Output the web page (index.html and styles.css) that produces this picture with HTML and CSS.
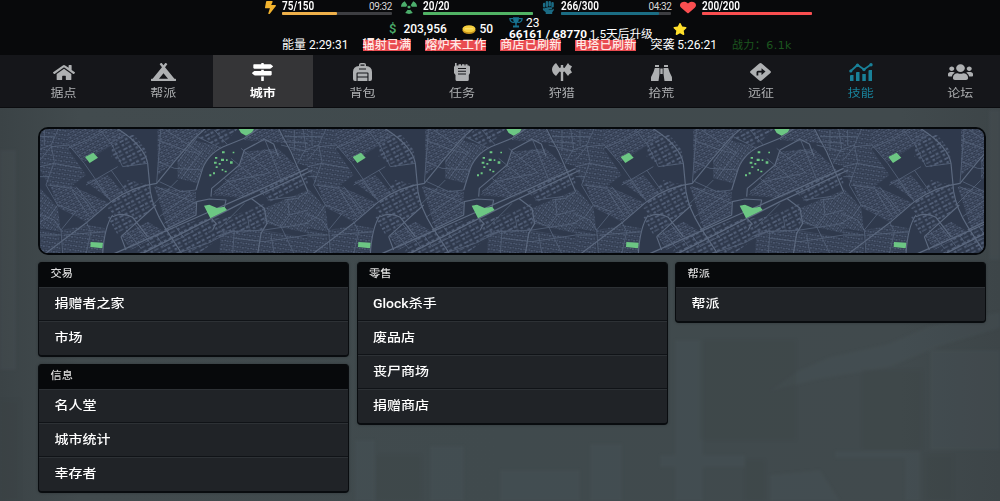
FILE: index.html
```html
<!DOCTYPE html>
<html lang="zh-CN">
<head>
<meta charset="utf-8">
<title>城市</title>
<link rel="stylesheet" href="styles.css">
</head>
<body>
<svg class="backdrop" viewBox="0 0 1000 501" aria-hidden="true">
  <g fill="#59666a" opacity=".13">
    <path d="M770 391L798 371 830 357 888 344 930 326 1000 312V328L940 346 890 367 820 379Z"/>
    <path d="M660 455h85v12h-85zM675 340h28v161h-28zM930 350h70v100h-70zM770 475l50-5 20 31h-70zM835 451h80v7h-80zM905 451h15v50h-15zM355 440h20v61h-20zM430 446h34v55h-34zM500 470h80v31h-80z"/>
    <path d="M0 150h16v220H0zM989 110h11v150h-11zM590 444h32v57h-32z"/>
  </g>
  <g fill="#343c3f" opacity=".15">
    <path d="M700 340h96v100h-96zM862 370h60v80h-60zM745 460h20v41h-20zM925 455h28v46h-28zM376 455h45v46h-45zM0 400h20v101H0z"/>
  </g>
</svg>

<header class="status">
  <div class="bars">
    <div class="stat">
      <svg class="stat-icon" viewBox="0 0 320 512" preserveAspectRatio="none" style="width:11px" fill="#f2b32e"><path d="M296 160H180.6l42.6-129.8C227.2 15 215.7 0 200 0H56C44 0 33.8 8.9 32.2 20.8l-32 240C-1.7 275.2 9.5 288 24 288h118.7L96.6 482.5c-3.6 15.2 8 29.5 23.3 29.5 8.4 0 16.4-4.4 20.8-12l176-304c9.3-15.9-2.2-36-20.7-36z"/></svg>
      <div class="meter"><div class="meter-text"><b>75/150</b><span>09:32</span></div><div class="track"><div class="fill gold" style="width:50%"></div></div></div>
    </div>
    <div class="stat">
      <svg class="stat-icon" viewBox="0 0 16 14" preserveAspectRatio="none" style="width:16px" fill="#4cae6c"><path d="M0 6.3A8 7 0 0 1 3.8.4L6.3 4.6A2.6 2.6 0 0 0 5.2 6.3ZM16 6.3A8 7 0 0 0 12.2.4L9.7 4.6A2.6 2.6 0 0 1 10.8 6.3ZM6.7 9.3L4.2 13A8 7 0 0 0 11.8 13L9.3 9.3A3 3 0 0 1 6.7 9.3Z"/><ellipse cx="8" cy="6.5" rx="1.6" ry="1.5"/></svg>
      <div class="meter"><div class="meter-text"><b>20/20</b></div><div class="track"><div class="fill green" style="width:100%"></div></div></div>
    </div>
    <div class="stat">
      <svg class="stat-icon" viewBox="0 0 14 14" preserveAspectRatio="none" style="width:13px" fill="#1b6b84"><rect x="1" y="2" width="2.6" height="5" rx="1.2"/><rect x="4" y="0" width="2.6" height="6.5" rx="1.2"/><rect x="7" y="0" width="2.6" height="6" rx="1.2"/><rect x="10" y="1" width="2.7" height="6" rx="1.2"/><path d="M1 7.500Q2.500 8.300 3.800 7.200 5 7.500 6 6.800H10.500A1 1 0 0 1 10.500 8.500H7.500L7 9.200H11.500L12.700 8V10L11 12V14H4V12L1 9.800Z"/></svg>
      <div class="meter"><div class="meter-text"><b>266/300</b><span>04:32</span></div><div class="track"><div class="fill teal" style="width:88.7%"></div></div></div>
    </div>
    <div class="stat">
      <svg class="stat-icon" viewBox="0 0 512 512" preserveAspectRatio="none" style="width:16px" fill="#fa4e50"><path d="M462.300 62.600C407.500 15.900 326 24.300 275.700 76.200L256 96.500l-19.700-20.300C186.100 24.300 104.500 15.900 49.700 62.600c-62.800 53.600-66.100 149.800-9.900 207.900l193.500 199.800c12.500 12.900 32.800 12.900 45.300 0l193.500-199.800c56.300-58.100 53-154.300-9.800-207.900z"/></svg>
      <div class="meter"><div class="meter-text"><b>200/200</b></div><div class="track"><div class="fill red" style="width:100%"></div></div></div>
    </div>
  </div>
  <div class="wallet">
    <span class="dollar">$</span><span class="cash">203,956</span>
    <svg class="coin" viewBox="0 0 14 9"><ellipse cx="7" cy="5.200" rx="6.500" ry="3.800" fill="#c8941c"/><ellipse cx="7" cy="3.800" rx="6.500" ry="3.500" fill="#f6cf3e"/><path d="M3 3.800H11" stroke="#ffe67a"/></svg>
    <span class="gold-count">50</span>
    <div class="level">
      <div class="rank">
        <svg width="14" height="11" viewBox="0 0 14 11"><path d="M4 .3H10C10 4 9.200 6 7.700 6.600V8.500H10V10.600H4V8.500H6.300V6.600C4.800 6 4 4 4 .3Z" fill="#177391"/><path d="M4 1.700H.9C1 4 2.800 5.300 5 5.500M10 1.700H13.100C13 4 11.200 5.300 9 5.500" fill="none" stroke="#177391" stroke-width="1.200"/></svg>
        <span>23</span>
      </div>
      <div class="xp"><b>66161 / 68770</b> <span>1.5天后升级</span></div>
    </div>
    <svg class="star" viewBox="0 0 576 512" preserveAspectRatio="none"><path fill="#ffdf2b" d="M259.300 17.800L194 150.200 47.900 171.500c-26.200 3.800-36.700 36.100-17.700 54.600l105.700 103-25 145.500c-4.500 26.300 23.200 46 46.400 33.700L288 439.600l130.700 68.700c23.200 12.200 50.900-7.400 46.400-33.700l-25-145.500 105.700-103c19-18.500 8.500-50.800-17.700-54.600L382 150.200 316.700 17.800c-11.700-23.600-45.600-23.900-57.400 0z"/></svg>
  </div>
  <div class="timers">
    <span>能量 2:29:31</span>
    <span class="tag">辐射已满</span>
    <span class="tag">熔炉未工作</span>
    <span class="tag">商店已刷新</span>
    <span class="tag">电塔已刷新</span>
    <span>突袭 5:26:21</span>
    <span class="power">战力：6.1k</span>
  </div>
</header>

<nav class="nav">
  <a class="tab"><svg style="width:22px;height:17px" viewBox="0 0 576 512" preserveAspectRatio="none"><path d="M280.370 148.260L96 300.110V464a16 16 0 0 0 16 16l112.060-.29a16 16 0 0 0 15.920-16V368a16 16 0 0 1 16-16h64a16 16 0 0 1 16 16v95.640a16 16 0 0 0 16 16.050L464 480a16 16 0 0 0 16-16V300L295.670 148.260a12.190 12.190 0 0 0-15.300 0zM571.600 251.470L488 182.560V44.050a12 12 0 0 0-12-12h-56a12 12 0 0 0-12 12v72.610L318.470 43a48 48 0 0 0-61 0L4.340 251.470a12 12 0 0 0-1.600 16.900l25.500 31A12 12 0 0 0 45.150 301l235.220-193.740a12.190 12.190 0 0 1 15.300 0L530.900 301a12 12 0 0 0 16.900-1.600l25.500-31a12 12 0 0 0-1.700-16.930z"/></svg><span>据点</span></a>
  <a class="tab"><svg style="width:25px;height:18px" viewBox="0 0 640 512" preserveAspectRatio="none"><path d="M624 448h-24.680L359.540 117.750l53.410-73.550c5.190-7.150 3.610-17.160-3.540-22.350l-25.900-18.790c-7.150-5.190-17.150-3.610-22.350 3.550L320 63.300 278.830 6.600c-5.190-7.150-15.200-8.740-22.350-3.550l-25.880 18.800c-7.150 5.190-8.740 15.200-3.540 22.350l53.410 73.550L40.680 448H16c-8.840 0-16 7.160-16 16v32c0 8.840 7.160 16 16 16h608c8.840 0 16-7.160 16-16v-32c0-8.840-7.160-16-16-16zM320 288l116.360 160H203.640L320 288z"/></svg><span>帮派</span></a>
  <a class="tab active"><svg style="width:21px;height:18px" viewBox="0 0 512 512" preserveAspectRatio="none"><path d="M507.310 84.690L464 41.370c-6-6-14.140-9.370-22.630-9.370H288V16c0-8.840-7.160-16-16-16h-32c-8.840 0-16 7.160-16 16v16H56c-13.250 0-24 10.750-24 24v80c0 13.250 10.750 24 24 24h385.370c8.490 0 16.620-3.370 22.630-9.370l43.310-43.310c6.250-6.260 6.250-16.380 0-22.630zM224 496c0 8.840 7.160 16 16 16h32c8.840 0 16-7.160 16-16V384h-64v112zm232-272H288v-32h-64v32H70.630c-8.490 0-16.620 3.370-22.630 9.370L4.690 276.690c-6.250 6.250-6.250 16.380 0 22.630L48 342.630c6 6 14.140 9.370 22.630 9.370H456c13.250 0 24-10.750 24-24v-80c0-13.250-10.750-24-24-24z"/></svg><span>城市</span></a>
  <a class="tab"><svg style="width:19px;height:18px" viewBox="0 0 19 18"><path fill-rule="evenodd" d="M6 3V1.800Q6 0 8 0H11Q13 0 13 1.800V3Q19 3.500 19 9V16Q19 18 17 18H2Q0 18 0 16V9Q0 3.500 6 3ZM7.500 2.800H11.500V1.500H7.500ZM6 5.500V6.500H13V5.500ZM3.500 10.500V18H4.600V14.500H14.400V18H15.500V10.500Q15.500 9.500 14.500 9.500H4.500Q3.500 9.500 3.500 10.500ZM4.600 10.600H14.400V13.400H4.600Z"/></svg><span>背包</span></a>
  <a class="tab"><svg style="width:16px;height:18px" viewBox="0 0 16 18"><path fill-rule="evenodd" d="M1 0H2.600V2.500H4.500V1.200H7V2.500H8V1.200H10.500V2.500H11.500V1.200H13.500V2.500H14.500Q16 2.500 16 4V10L14.800 12V16.500Q14.800 18 13.300 18H3Q1.500 18 1.500 16.500V12L0 10V4L1 2.500ZM4 5V6H12V5ZM4 7.800V8.800H12V7.800ZM4 10.600V11.600H12V10.600Z"/></svg><span>任务</span></a>
  <a class="tab"><svg style="width:20px;height:18px" viewBox="0 0 20 18"><path d="M8.800 2H11.200V4.500L12.500 5 16 0Q17 2.500 20 3.300L18.300 6.400 20 9.500Q17 10.500 16 13L12.500 8.500 11.200 9V18H8.800V9L7.500 8.500 4 13Q0 10 0 6.500 0 3 4 0L7.500 5 8.800 4.500Z"/></svg><span>狩猎</span></a>
  <a class="tab"><svg style="width:21px;height:16px" viewBox="0 0 21 16"><path d="M4 0H8V2H4ZM13 0H17V2H13ZM3.800 3H8.500V9L7.500 16H0V13.500Q0 11.500 1.300 9.500 2.700 7 3.800 3ZM12.500 3H17.200Q18.300 7 19.700 9.500 21 11.500 21 13.500V16H13.500L12.500 9ZM9.300 3.500H11.700V9H9.300Z"/></svg><span>拾荒</span></a>
  <a class="tab"><svg style="width:21px;height:18px" viewBox="0 0 21 18"><path fill-rule="evenodd" d="M9.300.5Q10.500-.4 11.700.5L20.400 8Q21.500 9 20.400 10L11.700 17.500Q10.500 18.400 9.300 17.500L.6 10Q-.5 9 .6 8ZM6.500 12.500H8.300V9.500H11.500V12L15.500 8.600 11.500 5.300V7.700H8Q6.500 7.700 6.500 9.200Z"/></svg><span>远征</span></a>
  <a class="tab skill"><svg style="width:24px;height:18px" viewBox="0 0 24 18"><path d="M1 13Q1 12 2 12H4.500V18H1ZM7 10Q7 9 8 9H10.500V18H7ZM13.300 11H16.800V18H13.300ZM19.500 8Q19.500 7 20.500 7H23V18H19.500Z"/><path d="M1.800 8L8.500 2 15 6.500 22 1.500" fill="none" stroke="currentColor" stroke-width="1.800"/><circle cx="1.800" cy="8" r="1.600"/><circle cx="8.500" cy="2.200" r="1.700"/><circle cx="15" cy="6.500" r="1.700"/><circle cx="22" cy="1.800" r="1.700"/></svg><span>技能</span></a>
  <a class="tab"><svg style="width:25px;height:18px" viewBox="0 0 640 512" preserveAspectRatio="none"><path d="M96 224c35.300 0 64-28.700 64-64s-28.700-64-64-64-64 28.700-64 64 28.700 64 64 64zm448 0c35.300 0 64-28.700 64-64s-28.700-64-64-64-64 28.700-64 64 28.700 64 64 64zm32 32h-64c-17.600 0-33.500 7.100-45.100 18.600 40.300 22.100 68.900 62 75.100 109.400h66c17.700 0 32-14.300 32-32v-32c0-35.300-28.700-64-64-64zm-256 0c61.900 0 112-50.100 112-112S381.900 32 320 32 208 82.100 208 144s50.100 112 112 112zm76.800 32h-8.300c-20.800 10-43.900 16-68.500 16s-47.600-6-68.500-16h-8.300C179.600 288 128 339.600 128 403.200V432c0 26.500 21.500 48 48 48h288c26.500 0 48-21.500 48-48v-28.800c0-63.600-51.600-115.200-115.200-115.200zm-223.700-13.400C161.500 263.100 145.600 256 128 256H64c-35.300 0-64 28.700-64 64v32c0 17.700 14.300 32 32 32h65.900c6.300-47.400 34.900-87.300 75.200-109.400z"/></svg><span>论坛</span></a>
</nav>

<main class="content">
  <svg class="map" viewBox="27 27 2832 372" preserveAspectRatio="none">
    <defs>
      <pattern id="rowsA" width="17" height="12" patternUnits="userSpaceOnUse" patternTransform="rotate(-28)"><path d="M1 2H7V6H1ZM9 3H15V8H9Z" fill="#54617a"/><path d="M0 10.500H17" stroke="#505d75" stroke-width="1.500"/></pattern>
      <pattern id="rowsB" width="16" height="13" patternUnits="userSpaceOnUse" patternTransform="rotate(8)"><path d="M1 2H6V6H1ZM8 3H14V7H8Z" fill="#54617a"/><path d="M0 11H16" stroke="#4e5b73" stroke-width="1.500"/></pattern>
      <pattern id="rowsC" width="12" height="19" patternUnits="userSpaceOnUse" patternTransform="rotate(34)"><path d="M2 1H6V8H2ZM2 10H7V16H2Z" fill="#54617a"/><path d="M10 0V19" stroke="#54617a" stroke-width="1.500"/></pattern>
      <pattern id="blocks" width="34" height="25" patternUnits="userSpaceOnUse" patternTransform="rotate(-27)"><path d="M2 3H16V8H2ZM20 2H29V9H20ZM4 14H11V21H4ZM15 15H30V19H15Z" fill="#515e76"/></pattern>
      <g id="district">
        <path fill="url(#rowsB)" d="M27 27H112L110 85 165 165 120 200 50 190 27 150ZM27 330L85 340 90 402H27ZM90 330L170 315 222 325 215 402H95ZM570 330L700 330 831 355V402H565ZM750 27H831V140L800 130Z"/>
        <path fill="url(#rowsA)" d="M112 27H260L290 45 245 75 160 125 110 75ZM165 185L230 165 275 215 245 245ZM55 190L130 200 235 250 165 305 80 262ZM370 200L495 215 495 285 410 325ZM380 27H520L430 125 380 165ZM270 345L350 305 400 335 300 390ZM640 95L740 85 810 150 640 235 545 225 620 145ZM650 27H740L770 70 640 60Z"/>
        <path fill="url(#rowsC)" d="M27 205L80 262 90 335 27 325ZM440 120L490 60 560 80 515 140 500 190 440 175ZM700 265L831 210V340L700 310Z"/>
        <path fill="url(#blocks)" d="M245 45H310L345 90 350 130 290 140 240 110ZM290 180L355 195 370 260 320 300 250 285 230 265ZM230 290L290 285 320 310 260 345ZM370 340L500 300 600 290 700 250 700 330 580 345 500 402H310ZM680 210L820 150 831 190 720 245ZM530 27H620L570 80 500 55Z"/>
        <g fill="none" stroke="#5c697f" stroke-width="3.500" stroke-linejoin="round">
          <path d="M250 20Q340 75 350 130L358 215Q366 265 400 320L455 405M20 418L170 305 240 245Q300 200 377 190L430 125 490 55 530 20M495 210L515 145Q535 95 590 75L640 55 690 20M740 20Q760 60 780 95L831 215M540 230L542 205 560 190 625 135 640 90 700 58 728 72 742 110"/>
          <path d="M240 405L520 282 831 145M325 405L640 245 845 150" stroke-width="4"/>
          <path d="M660 235L700 265 708 310 690 340 680 402M400 330L495 285 497 245 535 237 585 240 580 264M540 294L555 310 545 330M245 290Q275 275 305 292L350 350M270 350L375 255M270 350L285 390M245 285Q220 320 215 402"/>
        </g>
        <g fill="none" stroke="#56637a" stroke-width="2.500">
          <path d="M113 75L160 130 240 245M200 20L245 78 275 140M275 140L350 130M165 195L260 140M190 180L230 235M240 150L290 220M110 85L170 60 240 20M85 20L60 75 20 90M27 120L60 80 115 75M60 75L70 125 45 195 80 255 135 275 90 330 95 402M50 195L120 205 165 245 190 285M20 280L70 300 90 330M135 200L200 280M125 215L175 290M80 255L55 290 20 310"/>
          <path d="M390 20L382 125 377 190M382 125L430 145 515 150M380 60L460 90 500 100M405 30L510 100M440 125L500 50 570 85M455 170L515 90M385 185L450 215 495 210M375 200L495 250M365 255L440 180M385 290L480 220M400 310L495 245M550 30L590 75M630 85L720 160M600 115L690 190M580 175L640 225M660 120L700 90 740 100M550 215L590 185 710 160M700 55L735 140 750 180"/>
          <path d="M555 350L600 335 700 330 831 310M430 402L530 370 610 330 605 402M610 355L700 365 831 345M650 290L655 325M770 240L775 285 750 320 700 300M775 285L831 270M750 320L790 402M710 240L790 230M720 345L730 402M640 250L565 325M831 215L800 235 760 240M831 95L750 75M815 20L825 85 800 130M27 345H90M100 345L225 335M165 305L180 335 165 402M310 310L370 385M285 330L330 385M375 345L400 380 485 335M430 315L460 355"/>
          <path d="M760 50H831M760 65L831 70M790 30V85M40 30V75M27 50H70M27 140L70 130 150 145M27 170H55"/>
        </g>
        <g fill="#6cc683">
          <path d="M162 111L187 98 201 113 176 129ZM179 366L216 368 214 385 178 381ZM519 257L535 254 558 264 580 260 588 270 538 295ZM623 27H669L663 37 645 47 630 39Z"/>
          <path d="M573 94h8v6h-8zM605 95h5v5h-5zM552 111h7v5h-7zM570 116h9v7h-9zM585 118h5v5h-5zM597 124h8v7h-8zM549 125h8v6h-8zM563 129h6v5h-6zM554 139h6v5h-6zM572 147h5v5h-5zM581 152h6v5h-6zM546 157h6v6h-6zM535 163h6v6h-6z"/>
        </g>
      </g>
    </defs>
    <rect x="27" y="27" width="2832" height="372" fill="#2f394c"/>
    <use href="#district"/><use href="#district" x="803"/><use href="#district" x="1607"/><use href="#district" x="2410"/>
  </svg>
  <div class="columns">
    <div class="column">
      <section class="panel"><h2><span>交易</span></h2><a><span>捐赠者之家</span></a><a><span>市场</span></a></section>
      <section class="panel"><h2><span>信息</span></h2><a><span>名人堂</span></a><a><span>城市统计</span></a><a><span>幸存者</span></a></section>
    </div>
    <div class="column">
      <section class="panel"><h2><span>零售</span></h2><a><span>Glock杀手</span></a><a><span>废品店</span></a><a><span>丧尸商场</span></a><a><span>捐赠商店</span></a></section>
    </div>
    <div class="column">
      <section class="panel"><h2><span>帮派</span></h2><a><span>帮派</span></a></section>
    </div>
  </div>
</main>
</body>
</html>
```

FILE: styles.css
```css
* { box-sizing: border-box; }
body {
  margin: 0;
  height: 501px;
  overflow: hidden;
  background: linear-gradient(90deg, #3b4346, #424b4e 8%, #404a4d 50%, #414a4d 90%, #3d4548);
  color: #fff;
  font-family: Roboto, "Noto Sans CJK SC", sans-serif;
}
svg { display: block; flex: none; }
.backdrop { position: absolute; inset: 0; width: 1000px; height: 501px; z-index: -1; filter: blur(1.5px); }

.status { height: 55px; background: #08090b; overflow: hidden; }
.bars { display: flex; height: 16px; padding-left: 261px; }
.stat { display: flex; width: 139.700px; }
.stat-icon { height: 13px; margin: 1px 6px 0 auto; }
.meter { width: 110px; margin-right: 8.700px; flex: none; }
.meter-text { display: flex; justify-content: space-between; align-items: center; height: 12px; line-height: 12px; font-size: 10.500px; }
.meter-text b { font-weight: 600; font-size: 12px; transform: scaleX(.83); transform-origin: left; }
.meter-text span { font-size: 10px; letter-spacing: -.4px; color: #d8d8d8; padding-top: 1px; }
.track { height: 3px; background: #3d3e42; border-radius: 1px; }
.fill { height: 3px; border-radius: 1px; }
.gold { background: #eeb04a; }
.green { background: #51b365; }
.teal { background: #1b6d84; }
.red { background: #fa4e50; }

.wallet { display: flex; align-items: center; height: 23px; padding-left: 389px; font-size: 12px; line-height: 14px; }
.dollar { width: 14.500px; color: #4cae6c; font-size: 13px; font-weight: 500; padding-top: 3px; }
.cash, .gold-count { padding-top: 3px; font-weight: 500; letter-spacing: -.05px; }
.cash { width: 58px; }
.coin { width: 14px; height: 9px; margin: 4px 4px 0 0; }
.gold-count { width: 29.500px; }
.level { width: 163px; }
.rank { display: flex; gap: 3px; height: 11px; align-items: center; line-height: 11px; padding-top: 1px; }
.rank span { padding-top: 1px; }
.xp { height: 11px; line-height: 11px; padding-top: 1px; font-size: 11.700px; white-space: nowrap; }
.xp b { font-size: 11.800px; }
.star { width: 14px; height: 12px; margin: 3px 0 0 1px; }

.timers { display: flex; gap: 14px; height: 14px; margin-top: 1px; padding-left: 282px; font-size: 12px; line-height: 11px; white-space: nowrap; }
.timers span { display: block; height: 11px; letter-spacing: 0; }
.timers .tag { background: #e94b50; color: #ffe9e6; font-weight: 500; letter-spacing: .2px; }
.timers .power { margin-left: 1px; color: #1c561f; font-size: 11px; letter-spacing: .45px; font-family: "DejaVu Sans", "Noto Sans CJK SC", sans-serif; }

.nav { display: flex; height: 53px; padding-left: 13.700px; background: #15161a; border-bottom: 1px solid #0b0c0f; overflow: hidden; }
.tab { display: flex; flex: 0 0 99.650px; flex-direction: column; align-items: center; color: #aeb0b2; font-size: 13px; line-height: 18px; }
.tab svg { margin: auto auto 2.500px; fill: currentColor; }
.tab span { height: 23.500px; transform: scaleY(.9); }
.active { background: #353537; color: #fff; font-weight: 700; }
.skill { color: #198199; }

.content { padding: 19px 14px 0 38px; }
.map { width: 948px; height: 128px; border: 2px solid #06090c; border-radius: 10px; }
.columns { display: grid; grid-template-columns: repeat(3, 1fr); gap: 7.500px; align-items: start; margin-top: 7px; }
.column { display: grid; gap: 6.500px; }
.panel { border: 1px solid #090c0f; border-width: 0 1px 2px; border-radius: 4px; background: #202327; overflow: hidden; box-shadow: 0 0 3px rgba(0, 0, 0, .25); }
.panel h2 { margin: 0; height: 25px; padding-left: 11.500px; background: #07090b; color: #dcdcdc; font-size: 11.200px; font-weight: 500; line-height: 24px; }
.panel a { display: block; height: 34.100px; padding-left: 15.500px; border-top: 1px solid #2d3135; border-bottom: 1px solid #101317; font-size: 14px; font-weight: 500; line-height: 33.500px; }
.panel a:last-child { border-bottom: 0; }
.panel a span, .panel h2 span { display: inline-block; transform: scaleY(.88); }
```
